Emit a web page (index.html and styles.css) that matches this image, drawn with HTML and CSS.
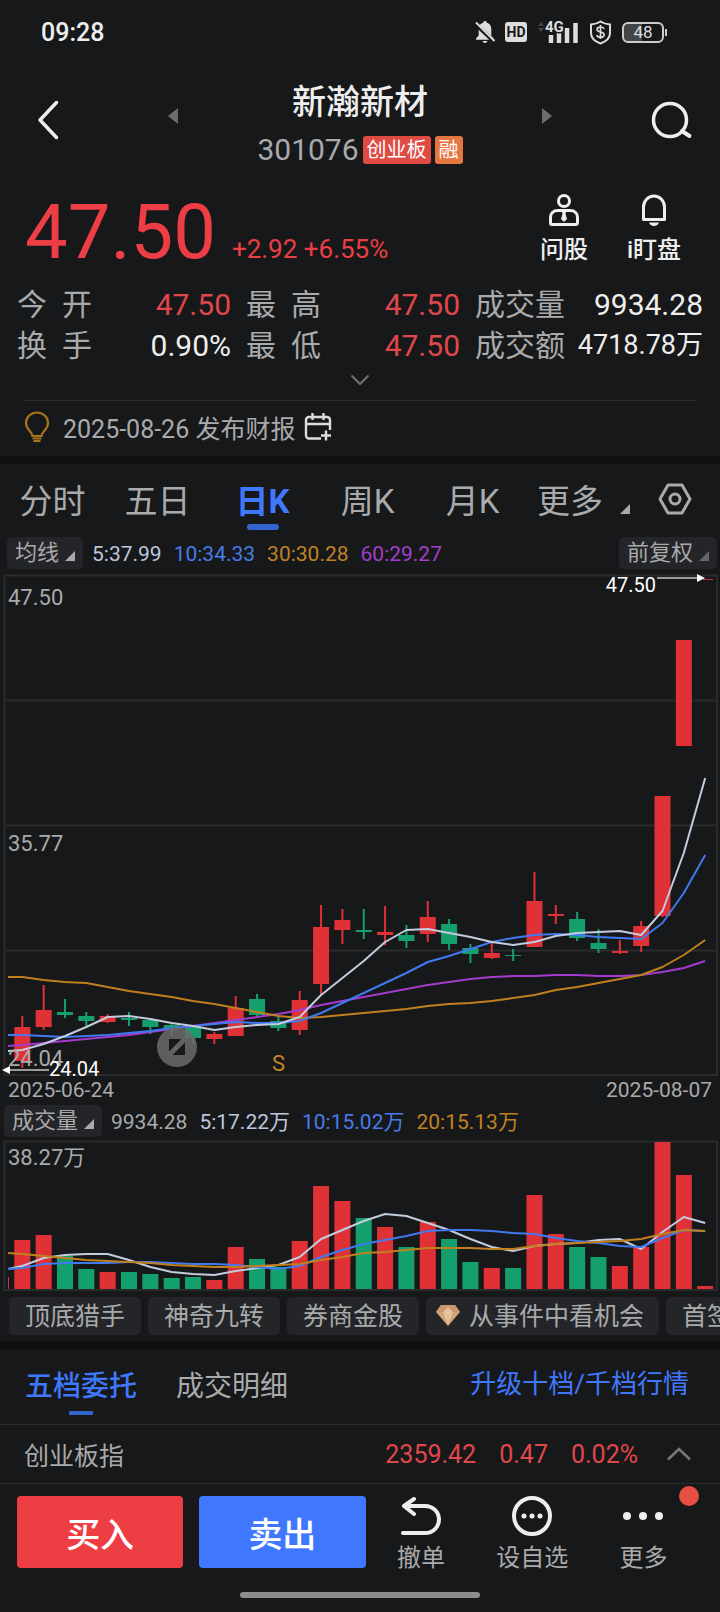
FILE: index.html
```
<!DOCTYPE html>
<html lang="zh-CN">
<head>
  <meta charset="UTF-8">
  <meta name="viewport" content="width=device-width, initial-scale=1.0">
  <title>新瀚新材 301076</title>
  <link rel="stylesheet" href="styles.css">
</head>
<body>
  <div class="status">
    <span class="time">09:28</span>
    <div class="status-icons">
      <svg width="20" height="24" viewBox="0 0 20 24"><path d="M10 1c1 0 1.600.7 1.600 1.600 3 .8 4.700 3.300 4.700 6.400v6.500l2.700 3v1.200H1v-1.200l2.700-3V9c0-3.100 1.700-5.600 4.700-6.400C8.400 1.700 9 1 10 1zM7.500 21h5c-.4 1.300-1.300 2-2.500 2s-2.100-.7-2.500-2z" fill="#ddd"/><path d="M0 3.500l19 18" stroke="#17181a" stroke-width="4"/><path d="M1 2.500l18.500 18.500" stroke="#ddd" stroke-width="2"/></svg>
      <span class="hd">HD</span>
      <svg width="42" height="24" viewBox="0 0 42 24"><path d="M4 2l3 4H1zM4 12l3-4H1z" fill="#444"/><path d="M14 23v-8M22 23V13M30 23V8M38.500 23V3" stroke="#ddd" stroke-width="4.500"/><text x="8" y="12" class="net">4G</text></svg>
      <svg width="23" height="25" viewBox="0 0 23 25"><path d="M11.500 1.500c3 2 6 2.800 9.500 3V13c0 5-4 8.500-9.500 10.500C6 21.500 2 18 2 13V4.500c3.500-.2 6.500-1 9.500-3z" fill="none" stroke="#ddd" stroke-width="2"/><path d="M15 9c-.5-1.500-1.800-2-3.500-2-2 0-3.400.9-3.400 2.500 0 3.700 7 1.400 7 5.200 0 1.600-1.500 2.600-3.600 2.600-2 0-3.300-.8-3.700-2.300M11.500 5v14" fill="none" stroke="#ddd" stroke-width="1.600"/></svg>
      <span class="battery">48</span>
    </div>
  </div>

  <header class="header">
    <button class="back" aria-label="返回"><svg width="22" height="40" viewBox="0 0 22 40"><path d="M19.500 2.500L3 20l16.500 17.500" fill="none" stroke="#eee" stroke-width="3.500" stroke-linecap="round" stroke-linejoin="round"/></svg></button>
    <div class="stock-nav">
      <button aria-label="上一只"><svg width="10" height="16" viewBox="0 0 10 16"><path d="M10 0v16L0 8z" fill="#6c6d6e"/></svg></button>
      <div class="stock">
        <h1>新瀚新材</h1>
        <div class="code">301076<span class="badge">创业板</span><span class="badge orange">融</span></div>
      </div>
      <button aria-label="下一只"><svg width="10" height="16" viewBox="0 0 10 16"><path d="M0 0v16l10-8z" fill="#6c6d6e"/></svg></button>
    </div>
    <button class="search" aria-label="搜索"><svg width="42" height="40" viewBox="0 0 42 40"><circle cx="19" cy="20" r="16.500" fill="none" stroke="#eee" stroke-width="3.500"/><path d="M31 31l7.500 5" stroke="#eee" stroke-width="4" stroke-linecap="round"/></svg></button>
  </header>

  <section class="quote">
    <div class="price-wrap">
      <span class="price">47.50</span>
      <span class="change">+2.92 +6.55%</span>
    </div>
    <div class="actions">
      <button>
        <svg width="32" height="32" viewBox="0 0 32 32" fill="none" stroke="#eee" stroke-width="3"><circle cx="16" cy="7" r="5.500"/><path d="M10 16.500h12c5 0 7.500 3 7.500 7V29a1.500 1.500 0 0 1-1.500 1.500H4A1.500 1.500 0 0 1 2.500 29v-5.500c0-4 2.500-7 7.500-7z"/><path d="M14.500 17h3l-.5 3 1.500 5-2.500 2.500L13.500 25l1.500-5z" fill="#eee" stroke-width="1"/></svg>
        问股
      </button>
      <button>
        <svg width="32" height="32" viewBox="0 0 32 32"><path d="M5.500 25.500V13a10.500 11 0 0 1 21 0v12.500z" fill="none" stroke="#eee" stroke-width="3" stroke-linejoin="round"/><path d="M11 28.500h10c-.8 2.300-2.500 3.500-5 3.500s-4.200-1.200-5-3.500z" fill="#eee"/></svg>
        i盯盘
      </button>
    </div>
  </section>

  <dl class="stats">
    <div><dt class="spread">今 开</dt><dd class="up">47.50</dd></div>
    <div><dt class="spread">最 高</dt><dd class="up">47.50</dd></div>
    <div><dt>成交量</dt><dd>9934.28</dd></div>
    <div><dt class="spread">换 手</dt><dd>0.90%</dd></div>
    <div><dt class="spread">最 低</dt><dd class="up">47.50</dd></div>
    <div><dt>成交额</dt><dd class="small">4718.78万</dd></div>
  </dl>
  <button class="expand" aria-label="展开"><svg width="20" height="12" viewBox="0 0 20 12"><path d="M1.500 1.500L10 10l8.500-8.500" fill="none" stroke="#6f7072" stroke-width="2"/></svg></button>

  <div class="notice">
    <svg width="26" height="32" viewBox="0 0 26 32" fill="none" stroke="#a9741a" stroke-width="2.200"><path d="M8.500 25c0-4.500-6.500-6-6.500-13a11 10.500 0 0 1 22 0c0 7-6.500 8.500-6.500 13zM8.500 27.500h9M9.500 30h7"/></svg>
    <span>2025-08-26 发布财报</span>
    <svg width="28" height="28" viewBox="0 0 28 28" fill="none" stroke="#ddd" stroke-width="2.400"><path d="M17 25.500H5a3 3 0 0 1-3-3V7a3 3 0 0 1 3-3h18a3 3 0 0 1 3 3v10M2 11h24M8.500 0v7M19.500 0v7M22 17.500v10M17 22.500h10"/></svg>
  </div>

  <nav class="periods">
    <button>分时</button>
    <button>五日</button>
    <button class="active">日K</button>
    <button>周K</button>
    <button>月K</button>
    <button class="more">更多<svg class="tri" width="10" height="10" viewBox="0 0 10 10"><path d="M10 0v10H0z"/></svg></button>
    <button class="gear" aria-label="设置"><svg width="34" height="32" viewBox="0 0 34 32" fill="none" stroke="#a9aaab" stroke-width="3"><path d="M10 2h14l8 14-8 14H10L2 16z" stroke-linejoin="round"/><circle cx="17" cy="16" r="5"/></svg></button>
  </nav>

  <div class="legend">
    <button class="pill">均线<svg class="tri" width="10" height="10" viewBox="0 0 10 10"><path d="M10 0v10H0z"/></svg></button>
    <span class="ma5">5:37.99</span>
    <span class="ma10">10:34.33</span>
    <span class="ma30">30:30.28</span>
    <span class="ma60">60:29.27</span>
    <button class="pill right">前复权<svg class="tri dim" width="10" height="10" viewBox="0 0 10 10"><path d="M10 0v10H0z"/></svg></button>
  </div>
  <svg class="chart" viewBox="0 572 720 506">
    <path class="grid" d="M4 700.500h712M4 825.500h712M4 950.500h712M4.500 575.500h712.500v499.500H4.500z"/>
    <text class="axis" x="8" y="605">47.50</text>
    <text class="axis" x="8" y="851">35.77</text>
    <g id="candles"></g>
    <path d="M703 579.500h10" stroke="#c23a3d"/>
    <path d="M657 578h42" stroke="#999" stroke-width="2"/>
    <path d="M697 574l8 4-8 4z" fill="#fff"/>
    <text class="mark" x="656" y="592" text-anchor="end">47.50</text>
    <circle cx="177" cy="1047" r="20" fill="#6b6b6b" opacity=".85"/>
    <path d="M169 1039h16v16h-16z" fill="#17181a"/>
    <path d="M168 1056l18-18" stroke="#626263" stroke-width="5"/>
    <text class="axis" x="8" y="1066">24.04</text>
    <path d="M9 1070h40" stroke="#999" stroke-width="2"/>
    <path d="M10 1066v8l-8-4z" fill="#fff"/>
    <text class="mark" x="49" y="1076">24.04</text>
    <text class="signal" x="272" y="1071">S</text>
  </svg>
  <div class="dates"><span>2025-06-24</span><span>2025-08-07</span></div>

  <div class="legend volume">
    <button class="pill">成交量<svg class="tri" width="10" height="10" viewBox="0 0 10 10"><path d="M10 0v10H0z"/></svg></button>
    <span>9934.28</span>
    <span class="ma5">5:17.22万</span>
    <span class="ma10">10:15.02万</span>
    <span class="ma30">20:15.13万</span>
  </div>
  <svg class="chart" viewBox="0 1139 720 153">
    <path class="grid" d="M4.500 1141.500H717V1290H4.500z"/>
    <text class="axis" x="8" y="1165">38.27万</text>
    <path d="M8.500 1277v12" stroke="#c23a3d"/>
    <g id="volumes"></g>
  </svg>

  <div class="chips">
    <button>顶底猎手</button>
    <button>神奇九转</button>
    <button>券商金股</button>
    <button class="gem"><svg width="24" height="22" viewBox="0 0 24 22"><path d="M5 0h14l5 7-12 14L0 7z" fill="#d3a679"/><path d="M5 0h14l5 7H0z" fill="#c99a70"/><path d="M7 7l5-5 5 5-5 13z" fill="#e3c29c"/></svg>从事件中看机会</button>
    <button>首签</button>
  </div>

  <div class="order-tabs">
    <button class="active">五档委托</button>
    <button>成交明细</button>
    <a href="#">升级十档/千档行情</a>
  </div>

  <div class="index-row">
    <span class="name">创业板指</span>
    <span>2359.42</span>
    <span>0.47</span>
    <span>0.02%</span>
    <button aria-label="展开指数"><svg width="26" height="14" viewBox="0 0 26 14"><path d="M2 12.500L13 2l11 10.500" fill="none" stroke="#77787a" stroke-width="2.500"/></svg></button>
  </div>

  <footer class="bottom">
    <button class="trade buy">买入</button>
    <button class="trade sell">卖出</button>
    <div class="tools">
      <button>
        <svg width="40" height="40" viewBox="0 0 40 40"><path d="M3 10h21c8 0 14 6 14 13.500S32 37 24 37H2M13 3L3 10l10 8" fill="none" stroke="#eee" stroke-width="4" stroke-linecap="round" stroke-linejoin="round"/></svg>
        撤单
      </button>
      <button>
        <svg width="40" height="40" viewBox="0 0 40 40"><circle cx="20" cy="20" r="18" fill="none" stroke="#eee" stroke-width="4"/><g fill="#eee"><circle cx="12" cy="20" r="2.500"/><circle cx="20" cy="20" r="2.500"/><circle cx="28" cy="20" r="2.500"/></g></svg>
        设自选
      </button>
      <button class="dot">
        <svg width="40" height="40" viewBox="0 0 40 40" fill="#eee"><circle cx="4" cy="20" r="4"/><circle cx="20" cy="20" r="4"/><circle cx="36" cy="20" r="4"/></svg>
        更多
      </button>
    </div>
  </footer>
  <div class="home-bar"></div>

  <script>
    (function(){
      const RED='#e03236', GREEN='#14a06c';
      const STEP=21.34, FIRST=22.3, W=16;
      // r/g, high, open/close top, open/close bottom, low, volume top
      const days=[
        ['r',1016,1027,1061,1068,1240],['r',985,1010,1027,1030,1235],['g',999,1012,1015,1018,1256],
        ['g',1012,1016,1021,1026,1269],['r',1014,1016,1022,1023,1272],['g',1012,1018,1020,1026,1272],
        ['g',1019,1020,1027,1034,1274],['g',1023,1025,1029,1035,1278],['g',1027,1027,1038,1044,1277],
        ['r',1032,1034,1039,1044,1280],['r',996,1008,1036,1036,1247],['g',994,999,1015,1018,1259],
        ['g',1017,1021,1028,1031,1267],['r',991,1000,1030,1035,1241],['r',905,927,984,995,1186],
        ['r',909,920,930,944,1201],['g',909,930,932,939,1218],['r',906,932,935,945,1227],
        ['g',925,935,941,948,1247],['r',901,917,934,942,1222],['g',919,924,944,950,1239],
        ['g',944,948,954,963,1262],['r',942,953,958,959,1268],['g',949,955,956,961,1268],
        ['r',872,901,947,947,1195],['r',905,914,916,924,1234],['g',912,919,938,941,1247],
        ['g',929,943,949,953,1257],['r',940,951,953,954,1266],['r',921,926,946,952,1247],
        ['r',796,796,916,917,1142],['r',640,640,746,746,1175],['r',579,579,580,580,1286]
      ];
      // moving averages, first point sits on the left edge
      const price={
        ma60:[1046,1045,1043,1041,1039,1037,1035,1032,1029,1026,1023,1020,1017,1014,1010,1005,1001,997,993,989,985,982,979,977,976,976,975,975,976,976,975,972,968,961],
        ma30:[977,977,980,982,983,987,991,994,997,1001,1004,1008,1012,1016,1018,1017,1015,1013,1011,1009,1006,1004,1003,1001,998,995,990,987,983,979,975,967,955,940],
        ma10:[1035,1035,1036,1037,1036,1035,1033,1031,1028,1026,1024,1022,1023,1023,1021,1013,1003,993,983,973,962,956,949,942,938,935,934,935,937,938,939,923,893,855],
        ma5:[1051,1050,1044,1036,1027,1017,1016,1019,1023,1026,1030,1027,1025,1024,1017,995,978,961,942,930,929,933,937,942,945,942,936,933,932,931,935,911,853,778]
      };
      const volume={
        ma5:[1269,1266,1258,1255,1254,1254,1260,1267,1272,1274,1275,1271,1268,1265,1257,1239,1230,1221,1214,1216,1223,1230,1239,1247,1251,1246,1244,1243,1240,1239,1249,1232,1217,1223],
        ma10:[1269,1268,1264,1263,1263,1263,1262,1262,1263,1264,1264,1265,1267,1269,1266,1257,1250,1244,1240,1236,1231,1230,1230,1231,1233,1234,1238,1241,1243,1246,1247,1238,1230,1231],
        ma30:[1253,1254,1256,1258,1260,1261,1262,1263,1265,1266,1267,1267,1266,1265,1264,1260,1257,1253,1252,1250,1248,1248,1248,1249,1249,1246,1244,1243,1242,1241,1239,1234,1230,1231]
      };

      function line(name,ys){
        const pts=ys.map((y,i)=>`${i?(FIRST+STEP*(i-1)).toFixed(1):8},${y}`).join(' ');
        return `<polyline class="line ${name}" points="${pts}"/>`;
      }
      function lines(set){return Object.keys(set).map(k=>line(k,set[k])).join('')}

      let candles='', bars='';
      days.forEach(([c,high,top,bottom,low,vol],i)=>{
        const x=FIRST+STEP*i, fill=c==='r'?RED:GREEN;
        bars+=`<rect x="${x-W/2}" y="${vol}" width="${W}" height="${1289-vol}" fill="${fill}"/>`;
        if(i===days.length-1) return;
        candles+=`<rect x="${x-1}" y="${high}" width="2" height="${low-high}" fill="${fill}"/>`;
        candles+=`<rect x="${x-W/2}" y="${top}" width="${W}" height="${bottom-top}" fill="${fill}"/>`;
      });
      document.getElementById('candles').innerHTML=candles+lines(price);
      document.getElementById('volumes').innerHTML=bars+lines(volume);
    })();
  </script>
</body>
</html>
```
FILE: styles.css
```
*{box-sizing:border-box}
body{font-family:Roboto,"Noto Sans CJK SC",sans-serif;background:#17181a;color:#a9aaab;margin:0;overflow-x:hidden}
button{font:inherit;color:inherit;background:none;border:none;padding:0;cursor:pointer;white-space:nowrap}
a{color:inherit;text-decoration:none}
svg{display:block;flex-shrink:0;overflow:visible}
h1,dl,dd{margin:0;font-weight:400}

/* status bar */
.status{display:flex;align-items:center;justify-content:space-between;height:64px;padding:0 56px 0 41px}
.time{font-size:25px;font-weight:500;color:#eee}
.status-icons{display:flex;align-items:center;gap:10px}
.hd{width:22px;height:20px;border-radius:3px;background:#ddd;color:#17181a;font-size:14px;font-weight:700;line-height:20px;text-align:center}
.net{font-size:15px;font-weight:700;fill:#ddd;stroke:#17181a;stroke-width:3px;paint-order:stroke}
.battery{position:relative;width:42px;height:21px;border:2px solid #ccc;border-radius:6px;background:linear-gradient(90deg,#444548 48%,transparent 48%);color:#ddd;font-size:17px;line-height:17px;text-align:center}
.battery::after{content:"";position:absolute;right:-5px;top:5px;width:2px;height:7px;background:#ccc}

.header{display:grid;grid-template-columns:168px 1fr 168px;align-items:center;height:112px}
.back{justify-self:start;padding-left:37px}
.search{justify-self:end;padding-right:27px}
.stock-nav{display:flex;align-items:center;justify-content:space-between}
.stock-nav button{padding-bottom:8px}
.stock{display:flex;flex-direction:column;align-items:center;gap:10px;padding-top:6px}
.stock h1{font-size:34px;font-weight:500;line-height:44px;color:#eee}
.code{display:flex;align-items:center;gap:4px;font-size:30px;line-height:32px}
.badge{height:28px;padding:0 4px;border-radius:3px;background:#df4a43;color:#fff;font-size:20px;line-height:28px}
.badge.orange{background:#e6763f}

.quote{display:flex;align-items:center;justify-content:space-between;height:108px;padding:0 36px 0 25px}
.price-wrap{display:flex;align-items:baseline;gap:16px;padding-top:4px;color:#ec3e44}
.price{font-size:76px;line-height:76px}
.change{font-size:26px}
.actions{display:flex;gap:30px}
.actions button{display:flex;flex-direction:column;align-items:center;gap:8px;min-width:60px;font-size:24px;font-weight:500;line-height:32px;color:#eee}

.stats{display:grid;grid-template-columns:214fr 214fr 228fr;column-gap:15px;padding:0 17px;font-size:30px;line-height:41px}
.stats div{display:flex;justify-content:space-between;white-space:nowrap}
.spread{width:75px;text-align-last:justify}
.stats dd{color:#eee}
.stats .up{color:#e0474b}
.stats .small{font-size:27px}
.expand{display:flex;align-items:center;justify-content:center;width:100%;height:28px}

.notice{display:flex;align-items:center;height:56px;margin:6px 24px 0;padding-bottom:3px;border-top:1px solid #2b2c2e;font-size:25px}
.notice span{margin:0 9px 0 13px}

/* k-line period tabs */
.periods{display:flex;height:78px;border-top:8px solid #0f1012;font-size:33px}
.periods button{position:relative;flex:1;display:flex;align-items:center;justify-content:center}
.periods .active{color:#3f78fc;font-weight:700}
.periods .active::after{content:"";position:absolute;bottom:4px;width:32px;height:6px;border-radius:3px;background:#3266cc}
.periods .more{justify-content:flex-end;gap:17px}
.periods .gear{flex:0 0 90px}
.tri{fill:#a9aaab;align-self:flex-end}
.tri.dim{fill:#666769}
.periods .tri{margin-bottom:20px}

.legend{display:flex;align-items:center;gap:9px;padding:3px 3px 3px 7px;font-size:22px;line-height:32px}
.legend.volume{padding:2px 4px}
.legend span{margin-right:3px;padding-top:3px;font-size:21px;line-height:29px}
.pill{display:flex;gap:6px;height:32px;padding:0 8px;border-radius:5px;background:#242529}
.pill .tri{margin-bottom:8px}
.pill.right{margin-left:auto}
.legend .ma5{color:#bdc7df}
.legend .ma10{color:#477ce8}
.legend .ma30{color:#c08124}
.legend .ma60{color:#a23fcb}

.chart{width:100%;height:auto}
.grid{fill:none;stroke:#292a2c;stroke-width:2}
.axis,.signal{font-size:22px;fill:#a9aaab}
.mark{font-size:20px;fill:#fff}
.signal{fill:#c9851f}
.line{fill:none;stroke-width:2;stroke-linejoin:round}
.line.ma5{stroke:#c3cbdf}
.line.ma10{stroke:#4179ee}
.line.ma30{stroke:#c0801d}
.line.ma60{stroke:#a43bce}
.dates{display:flex;justify-content:space-between;padding:0 8px;font-size:21px;line-height:25px}

.chips{display:flex;gap:7px;padding:5px 0 6px 9px;overflow:hidden}
.chips button{display:flex;flex-shrink:0;height:38px;padding:0 16px;border-radius:5px;background:#242529;font-size:25px;line-height:40px}
.chips .gem{gap:9px;padding:0 15px 0 10px}
.gem svg{margin-top:8px}

.order-tabs{display:flex;gap:39px;height:84px;padding:0 31px 0 25px;border-top:8px solid #0f1012;border-bottom:1px solid #2b2c2e;font-size:28px}
.order-tabs button{position:relative;height:70px}
.order-tabs .active{color:#3f78fc;font-weight:500}
.order-tabs .active::after{content:"";position:absolute;left:50%;bottom:4px;width:24px;height:4px;margin-left:-12px;border-radius:1px;background:#3266cc}
.order-tabs a{margin-left:auto;font-size:26px;line-height:70px;color:#3f78fc}

.index-row{display:flex;align-items:center;gap:23px;height:59px;padding:0 28px 0 24px;border-bottom:1px solid #2b2c2e;font-size:25px;color:#e0474b}
.index-row .name{margin-right:auto;color:#a9aaab}
.index-row button{margin-left:5px}

.bottom{display:flex;gap:16px;padding:12px 21px 0 17px}
.trade{flex:166;height:72px;border-radius:4px;color:#fff;font-size:34px;font-weight:500}
.buy{background:#ed3e43}
.sell{background:#3f78fe}
.tools{display:flex;flex:333;margin-left:-16px}
.tools button{position:relative;flex:1;display:flex;flex-direction:column;align-items:center;gap:6px;font-size:24px;line-height:32px}
.tools .dot::after{content:"";position:absolute;right:0;top:-10px;width:20px;height:20px;border-radius:50%;background:#e74f43}
.home-bar{width:240px;height:6px;margin:18px auto 14px;border-radius:3px;background:#8b8c8d}
```
